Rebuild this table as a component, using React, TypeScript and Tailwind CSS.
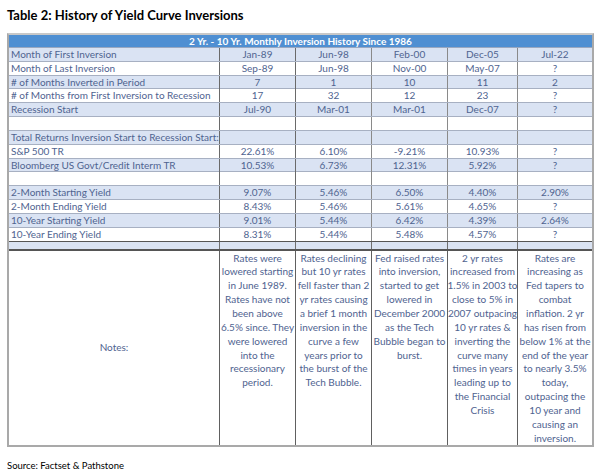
const rows: { label: string; vals: string[]; blue: boolean }[] = [
  { label: "Month of First Inversion", vals: ["Jan-89", "Jun-98", "Feb-00", "Dec-05", "Jul-22"], blue: true },
  { label: "Month of Last Inversion", vals: ["Sep-89", "Jun-98", "Nov-00", "May-07", "?"], blue: false },
  { label: "# of Months Inverted in Period", vals: ["7", "1", "10", "11", "2"], blue: true },
  { label: "# of Months from First Inversion to Recession", vals: ["17", "32", "12", "23", "?"], blue: false },
  { label: "Recession Start", vals: ["Jul-90", "Mar-01", "Mar-01", "Dec-07", "?"], blue: true },
  { label: "", vals: ["", "", "", "", ""], blue: false },
  { label: "Total Returns Inversion Start to Recession Start:", vals: ["", "", "", "", ""], blue: true },
  { label: "S&P 500 TR", vals: ["22.61%", "6.10%", "-9.21%", "10.93%", "?"], blue: false },
  { label: "Bloomberg US Govt/Credit Interm TR", vals: ["10.53%", "6.73%", "12.31%", "5.92%", "?"], blue: true },
  { label: "", vals: ["", "", "", "", ""], blue: false },
  { label: "2-Month Starting Yield", vals: ["9.07%", "5.46%", "6.50%", "4.40%", "2.90%"], blue: true },
  { label: "2-Month Ending Yield", vals: ["8.43%", "5.46%", "5.61%", "4.65%", "?"], blue: false },
  { label: "10-Year Starting Yield", vals: ["9.01%", "5.44%", "6.42%", "4.39%", "2.64%"], blue: true },
  { label: "10-Year Ending Yield", vals: ["8.31%", "5.44%", "5.48%", "4.57%", "?"], blue: false },
];

const notes: string[][] = [
  ["Rates were", "lowered starting", "in June 1989.", "Rates have not", "been above", "6.5% since. They", "were lowered", "into the", "recessionary", "period."],
  ["Rates declining", "but 10 yr rates", "fell faster than 2", "yr rates causing", "a brief 1 month", "inversion in the", "curve a few", "years prior to", "the burst of the", "Tech Bubble."],
  ["Fed raised rates", "into inversion,", "started to get", "lowered in", "December 2000", "as the Tech", "Bubble began to", "burst."],
  ["2 yr rates", "increased from", "1.5% in 2003 to", "close to 5% in", "2007 outpacing", "10 yr rates &", "inverting the", "curve many", "times in years", "leading up to", "the Financial", "Crisis"],
  ["Rates are", "increasing as", "Fed tapers to", "combat", "inflation. 2 yr", "has risen from", "below 1% at the", "end of the year", "to nearly 3.5%", "today,", "outpacing the", "10 year and", "causing an", "inversion."],
];

const cols = "grid grid-cols-[210px_76px_76px_76px_70px_75px]";

export default function App() {
  return (
    <div className="w-[602px] h-[472px] bg-white font-['Lato',sans-serif] text-[#4f6390] overflow-hidden">
      <div className="pl-[7px] pt-[6px] h-[33px] text-[13px] font-bold text-black">
        Table 2: History of Yield Curve Inversions
      </div>
      <div className="ml-[7px] w-[587px] border-2 border-[#a9a9a9] border-t-[#c8c8c8]">
        <div className="h-[13px] bg-[#4f8fd2] text-white font-bold text-[10px] leading-[13px] text-center border-b border-[#9aa8c0]">
          2 Yr. - 10 Yr. Monthly Inversion History Since 1986
        </div>
        {rows.map((r, i) => (
          <div
            key={i}
            className={`${cols} h-[13.84px] text-[10px] leading-[13px] border-b border-[#a7b0c2] ${r.blue ? "bg-[#dae3f3]" : "bg-white"}`}
          >
            <div className="pl-[2px] whitespace-nowrap">{r.label}</div>
            {r.vals.map((v, j) => (
              <div key={j} className={`border-l text-center ${j < 2 ? "border-[#6a6a6a]" : "border-[#8a8a8a]"}`}>
                {v}
              </div>
            ))}
          </div>
        ))}
        <div className={`${cols} h-[10px] bg-[#dae3f3] border-t border-b-2 border-[#555] -mt-px`}>
          <div />
          {[0, 1, 2, 3, 4].map((j) => (
            <div key={j} className="border-l border-[#707070]" />
          ))}
        </div>
        <div className={`${cols} h-[194px] bg-white text-[10px] leading-[13.84px]`}>
          <div className="flex items-center justify-center">Notes:</div>
          {notes.map((n, j) => (
            <div key={j} className="border-l border-[#606060] flex flex-col items-center pt-[1px]">
              {n.map((line, k) => (
                <span key={k} className="whitespace-nowrap">
                  {line}
                </span>
              ))}
            </div>
          ))}
        </div>
      </div>
      <div className="pl-[7px] pt-[12px] text-[9.5px] text-black">Source: Factset &amp; Pathstone</div>
    </div>
  );
}
